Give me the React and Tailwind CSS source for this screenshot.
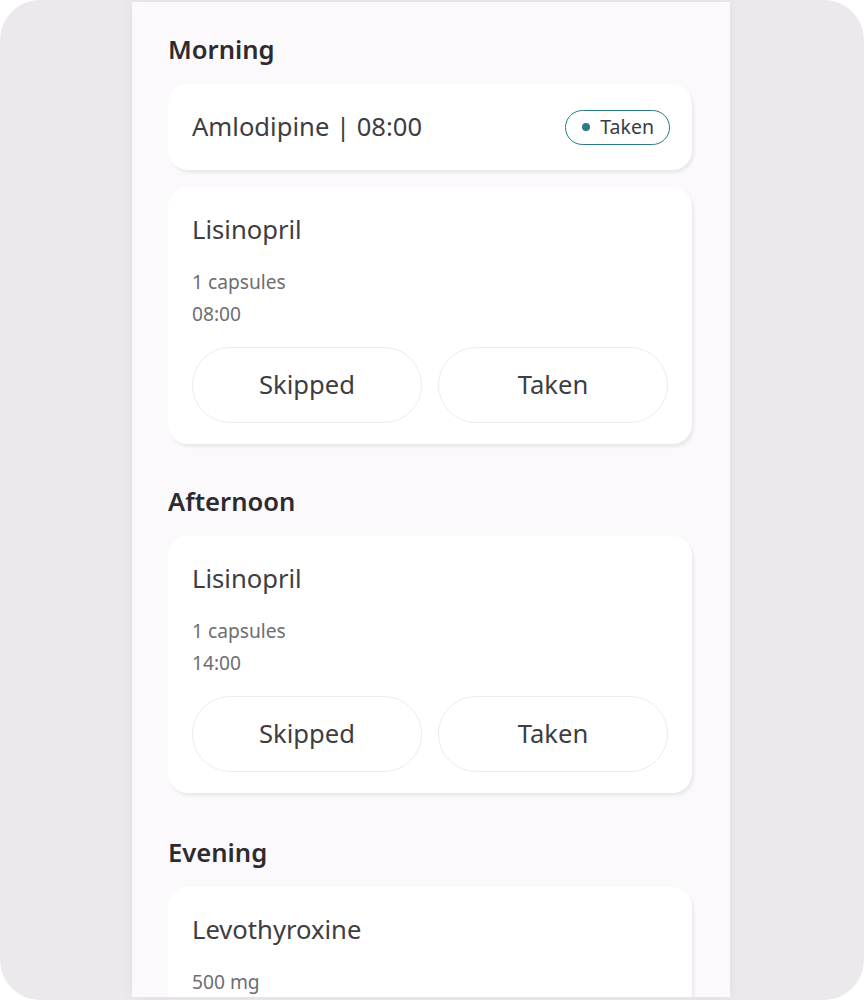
const font = { fontFamily: '"Noto Sans", "Open Sans", sans-serif' };

function SectionTitle({ children }) {
  return <h2 className="text-[25.6px] leading-8 font-semibold text-[#2d2b30] mb-[18px]">{children}</h2>;
}

function TakenBadge() {
  return (
    <span className="flex items-center gap-[10px] h-[35px] pl-[16px] pr-[15px] rounded-full border-[1.5px] border-[#2b7a85]">
      <span className="w-2 h-2 rounded-full bg-[#2b7a85]" />
      <span className="text-[19.5px] leading-6 text-[#3c3b3f]">Taken</span>
    </span>
  );
}

function DoneCard({ name, time }) {
  return (
    <div className="h-[86px] flex items-center justify-between pl-6 pr-[22px] bg-white rounded-[20px] shadow-[2px_3px_3px_rgba(40,30,60,0.07)]">
      <span className="text-[25.6px] leading-8 text-[#3e3d41]">{name} | {time}</span>
      <TakenBadge />
    </div>
  );
}

function DoseCard({ name, details }) {
  return (
    <div className="bg-white rounded-[20px] px-6 pt-[27px] pb-[21px] shadow-[2px_3px_3px_rgba(40,30,60,0.07)]">
      <div className="text-[25.6px] leading-8 text-[#3e3d41]">{name}</div>
      <div className="mt-[20px] text-[19.2px] leading-8 text-[#6e6d72]">
        {details.map((d) => (
          <div key={d}>{d}</div>
        ))}
      </div>
      <div className="mt-[17px] grid grid-cols-2 gap-4">
        {['Skipped', 'Taken'].map((label) => (
          <button
            key={label}
            className="h-[76px] rounded-full border-[1.5px] border-[#ecebee] bg-white text-[25.6px] text-[#3e3d41]"
          >
            {label}
          </button>
        ))}
      </div>
    </div>
  );
}

export default function App() {
  return (
    <div className="w-[864px] h-[1000px] bg-white" style={font}>
      <div className="w-full h-full rounded-[40px] bg-[#ebe9ec] overflow-hidden flex pl-[132px] pt-[2px] pb-[3px]">
        <div className="w-[598px] h-full bg-[#fbf9fc] overflow-hidden pl-9 pr-[38px] pt-8 shadow-[0_0_12px_rgba(0,0,0,0.05)]">
          <section>
            <SectionTitle>Morning</SectionTitle>
            <div className="flex flex-col gap-[17px]">
              <DoneCard name="Amlodipine" time="08:00" />
              <DoseCard name="Lisinopril" details={['1 capsules', '08:00']} />
            </div>
          </section>
          <section className="mt-[42px]">
            <SectionTitle>Afternoon</SectionTitle>
            <DoseCard name="Lisinopril" details={['1 capsules', '14:00']} />
          </section>
          <section className="mt-[44px]">
            <SectionTitle>Evening</SectionTitle>
            <DoseCard name="Levothyroxine" details={['500 mg', '20:00']} />
          </section>
        </div>
      </div>
    </div>
  );
}
